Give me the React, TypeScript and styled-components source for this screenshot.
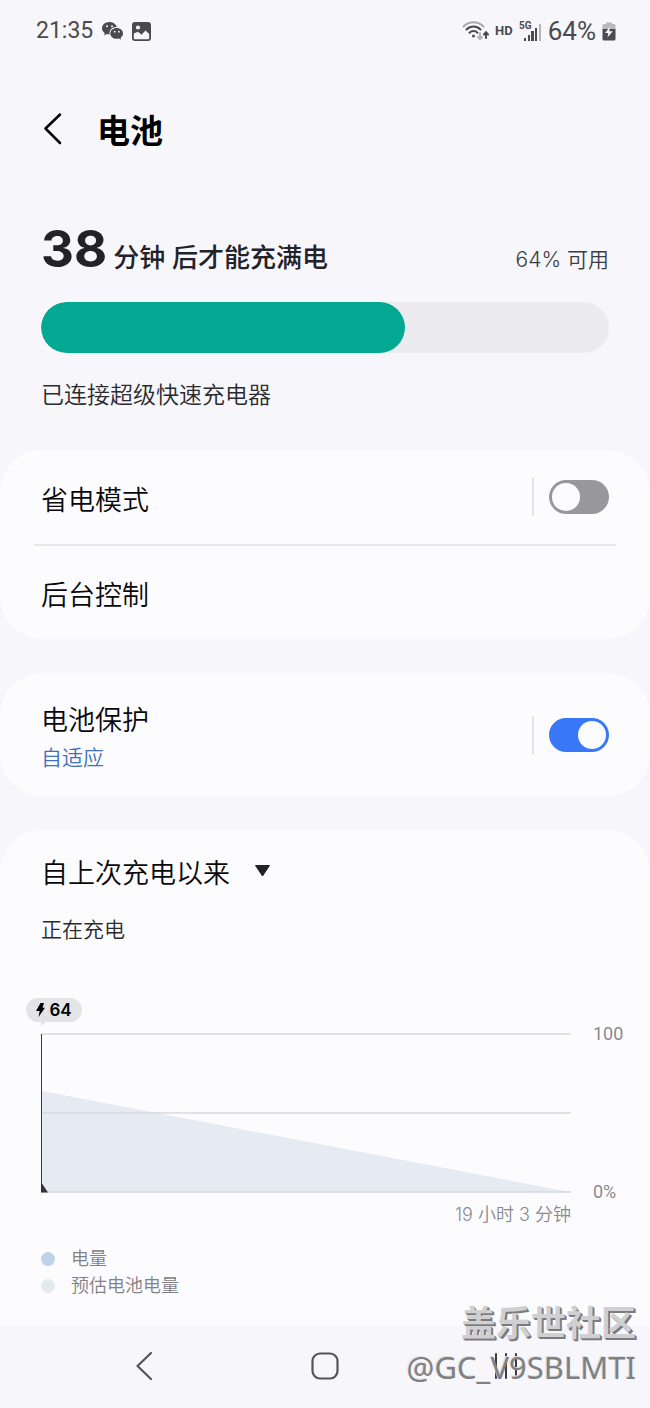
import React, { useState } from "react";
import styled, { createGlobalStyle } from "styled-components";

const GlobalStyle = createGlobalStyle`
  *, *::before, *::after { box-sizing: border-box; }
  body {
    margin: 0;
    background: #f6f6fb;
    color: #08080a;
    font-family: Inter, "Noto Sans CJK SC", sans-serif;
    font-weight: 350;
  }
  h1, h2, p, ul { margin: 0; padding: 0; font-weight: inherit; }
  button { border: 0; padding: 0; background: none; color: inherit; cursor: pointer; }
`;

const Screen = styled.div`
  display: flex;
  flex-direction: column;
  min-height: 100vh;
`;

const StatusBar = styled.header`
  display: flex;
  align-items: center;
  justify-content: space-between;
  height: 60px;
  padding: 2px 34px 0 36px;
  color: #4b4b4e;
`;

const StatusGroup = styled.div<{ $gap: number }>`
  display: flex;
  align-items: center;
  gap: ${(p) => p.$gap}px;
`;

const StatusText = styled.span<{ $size: number }>`
  font: 400 ${(p) => p.$size}px/30px Roboto, sans-serif;
`;

const HdText = styled.span`
  font: 700 13px/20px Roboto, sans-serif;
`;

const AppBar = styled.div`
  display: flex;
  align-items: center;
  gap: 33px;
  height: 138px;
  padding: 0 42px;
`;

const IconButton = styled.button`
  display: flex;
  align-items: center;
  justify-content: center;
`;

const Title = styled.h1`
  padding-top: 4px;
  font-size: 33px;
  line-height: 48px;
  font-weight: 600;
  color: #000;
`;

const Summary = styled.section`
  padding: 19px 41px 40px;
`;

const Headline = styled.div`
  display: flex;
  align-items: baseline;
  justify-content: space-between;
  height: 85px;
  color: #232228;
`;

const Remaining = styled.p`
  display: flex;
  align-items: baseline;
  gap: 6px;
  font-size: 26px;
  line-height: 64px;
  font-weight: 500;
`;

const Minutes = styled.span`
  font-size: 51px;
  font-weight: 700;
`;

const Available = styled.span`
  font-size: 21px;
  color: #3d3d42;
`;

const Meter = styled.div`
  height: 51px;
  border-radius: 26px;
  background: #ececf0;
  overflow: hidden;
`;

const MeterFill = styled.div`
  height: 100%;
  border-radius: 26px;
  background: #03a893;
`;

const Note = styled.p<{ $size: number; $top: number }>`
  margin-top: ${(p) => p.$top}px;
  font-size: ${(p) => p.$size}px;
  line-height: 30px;
  color: #2a2a2f;
`;

const Card = styled.section`
  border-radius: 42px;
  background: #fcfcff;
  margin-bottom: 34px;
`;

const ChartCard = styled(Card)`
  flex: 1;
  margin-bottom: 0;
  padding: 24px 25px 26px 41px;
  border-radius: 42px 42px 0 0;
`;

const Row = styled.div<{ $height: number }>`
  display: flex;
  align-items: center;
  justify-content: space-between;
  min-height: ${(p) => p.$height}px;
  padding: 0 41px;
`;

const RowText = styled.div`
  padding-top: 7px;
`;

const Separator = styled.hr`
  height: 2px;
  margin: 0 34px;
  border: 0;
  background: #e8e8ec;
`;

const RowLabel = styled.label`
  display: block;
  font-size: 27px;
  line-height: 40px;
`;

const RowButton = styled.button`
  font: inherit;
  font-size: 27px;
  line-height: 40px;
`;

const RowHint = styled.p`
  font-size: 21px;
  line-height: 34px;
  color: #3f70bc;
`;

const SwitchBox = styled.div`
  display: flex;
  align-items: center;
  gap: 15px;

  &::before {
    content: "";
    width: 2px;
    height: 38px;
    background: #e3e3e9;
  }
`;

const Switch = styled.input`
  appearance: none;
  display: flex;
  align-items: center;
  width: 60px;
  height: 34px;
  margin: 0;
  padding: 0 3px;
  border-radius: 17px;
  background: #98979c;
  cursor: pointer;

  &::before {
    content: "";
    width: 28px;
    height: 28px;
    border-radius: 50%;
    background: #fcfcff;
  }
  &:checked {
    justify-content: flex-end;
    background: #3877f8;
  }
`;

const Period = styled.div`
  display: flex;
  align-items: center;
  gap: 24px;

  svg { margin-bottom: 6px; }
`;

const PeriodSelect = styled.select`
  appearance: none;
  border: 0;
  margin: 0;
  padding: 0;
  background: none;
  color: inherit;
  font: inherit;
  font-size: 27px;
  line-height: 40px;
  height: 40px;
`;

const Badge = styled.div`
  position: relative;
  display: flex;
  align-items: center;
  justify-content: center;
  gap: 4px;
  width: 56px;
  height: 24px;
  margin: 53px 0 2px -15px;
  border-radius: 12px;
  background: #e4e4e7;
  color: #000;
  font-size: 17px;
  line-height: 24px;
  font-weight: 600;

  &::after {
    content: "";
    position: absolute;
    left: 15px;
    top: 23px;
    border-top: 5px solid #e4e4e7;
    border-right: 6px solid transparent;
  }
`;

const Plot = styled.div`
  display: grid;
  grid-template-columns: 1fr 32px;
  column-gap: 22px;
  color: #8a8a90;
`;

const PlotArea = styled.div`
  padding: 9px 0;

  svg { display: block; width: 100%; height: 160px; }
`;

const Axis = styled.div`
  display: flex;
  flex-direction: column;
  justify-content: space-between;
  font: 400 18px/20px Roboto, sans-serif;
`;

const TimeLabel = styled.span`
  text-align: right;
  font-size: 18px;
  line-height: 26px;
`;

const Legend = styled.ul`
  margin-top: 17px;
  list-style: none;
`;

const LegendItem = styled.li<{ $color: string }>`
  display: flex;
  align-items: center;
  gap: 16px;
  font-size: 18px;
  line-height: 27px;
  color: #808085;

  &::before {
    content: "";
    width: 14px;
    height: 14px;
    border-radius: 50%;
    background: ${(p) => p.$color};
  }
`;

const NavBar = styled.nav`
  position: relative;
  display: grid;
  grid-template-columns: repeat(3, 1fr);
  height: 82px;
  padding: 0 54px 2px;
`;

const Watermark = styled.div`
  position: absolute;
  right: 14px;
  bottom: 19px;
  text-align: right;
  white-space: nowrap;
  pointer-events: none;
  line-height: 44px;
`;

const WatermarkTitle = styled.div`
  font-size: 35px;
  font-weight: 600;
  color: #d0d0d3;
  text-shadow: 1px 1px 0 #7b7b7e, 2px 2px 0 #7b7b7e;
`;

const WatermarkUser = styled.div`
  font-family: "Noto Sans", sans-serif;
  font-size: 31px;
  font-weight: 400;
  color: #808083;
  text-shadow: -1px -1px 0 #dedee2;
`;

const WeChatIcon = () => (
  <svg width="23" height="20" viewBox="0 0 23 20" aria-hidden="true">
    <path d="M8.400 1C4.200 1 1 3.800 1 7.300c0 2 1.100 3.700 2.800 4.900L3.100 14.500l2.700-1.400c.9.300 1.700.4 2.700.4C8 9 11 6 15.800 6.100 15.100 3.200 12 1 8.400 1z" fill="currentColor" />
    <path d="M15.700 7c-3.600 0-6.400 2.400-6.400 5.400s2.800 5.400 6.400 5.400c.8 0 1.500-.1 2.200-.3l2.200 1.300-.6-2c1.500-1 2.500-2.600 2.500-4.400C22 9.400 19.200 7 15.700 7z" fill="currentColor" />
    <g fill="#f6f6fb">
      <circle cx="6" cy="5.300" r="1" /><circle cx="11" cy="5.300" r="1" />
      <circle cx="13.700" cy="10.700" r="0.900" /><circle cx="17.900" cy="10.700" r="0.900" />
    </g>
  </svg>
);

const PictureIcon = () => (
  <svg width="19" height="19" viewBox="0 0 19 19" aria-hidden="true">
    <rect width="19" height="19" rx="3" fill="currentColor" />
    <path d="M1.800 11.500L6 9.800l3.500 3 4-4.300 3.700 3.500V16a1.200 1.200 0 0 1-1.200 1.200H3A1.200 1.200 0 0 1 1.800 16z" fill="#f6f6fb" />
    <circle cx="6" cy="5.500" r="2.100" fill="#f6f6fb" />
  </svg>
);

const WifiIcon = () => (
  <svg width="27" height="22" viewBox="0 0 27 22" fill="none" strokeLinecap="round" aria-hidden="true">
    <path d="M1.500 6.500C7 .8 16 .8 21.500 6.500" stroke="#a9a9ad" strokeWidth="2" />
    <path d="M4.500 9.500c4-4 10-4 14 0M7.500 12.800c2.300-2.300 5.700-2.300 8 0" stroke="currentColor" strokeWidth="2" />
    <circle cx="11.500" cy="16" r="1.500" fill="currentColor" />
    <path d="M18 13v6M16 17l2 2.200 2-2.200" stroke="#b5b5b9" strokeWidth="2" />
    <path d="M24 18v-5.500M22 14.500l2-2.300 2 2.300" stroke="currentColor" strokeWidth="2" />
  </svg>
);

const SignalIcon = () => (
  <svg width="23" height="22" viewBox="0 0 23 22" aria-hidden="true">
    <text x="0" y="9" fontFamily="Roboto, sans-serif" fontWeight="700" fontSize="10" fill="currentColor">5G</text>
    <g fill="currentColor">
      <rect x="5" y="18" width="2" height="3" /><rect x="9" y="15" width="2" height="6" />
      <rect x="12" y="11" width="3" height="10" /><rect x="16" y="8" width="2" height="13" />
    </g>
    <rect x="20" y="4" width="2" height="17" fill="#b5b5b9" />
  </svg>
);

const BatteryIcon = () => (
  <svg width="14" height="20" viewBox="0 0 14 20" aria-hidden="true">
    <path d="M4 1.500h6V3h2a1.500 1.500 0 0 1 1.500 1.500V9H.5V4.500A1.500 1.500 0 0 1 2 3h2z" fill="#b9b9bd" />
    <path d="M.5 8h13v10a1.500 1.500 0 0 1-1.500 1.500H2A1.500 1.500 0 0 1 .5 18z" fill="currentColor" />
    <path d="M8 5.500L3 12h3.300L5.500 16.500l5.300-6.300H7.300z" fill="#f6f6fb" />
  </svg>
);

const Chart = () => (
  <svg viewBox="0 0 530 160" preserveAspectRatio="none" role="img" aria-label="电量">
    <path d="M1 58L529 159H1z" fill="#e5eaf3" />
    <path d="M0 1h530M0 80h530M0 159h530" stroke="#dadae0" strokeOpacity="0.800" strokeWidth="2" />
    <path d="M0.500 1v158" stroke="#3c3c40" strokeWidth="1" />
    <path d="M0 149l7 10.500H0z" fill="#333336" />
  </svg>
);

export default function App() {
  const [saving, setSaving] = useState(false);
  const [protect, setProtect] = useState(true);
  const level = 64;

  return (
    <Screen>
      <GlobalStyle />
      <StatusBar>
        <StatusGroup $gap={8}>
          <StatusText $size={23}>21:35</StatusText>
          <WeChatIcon />
          <PictureIcon />
        </StatusGroup>
        <StatusGroup $gap={6}>
          <WifiIcon />
          <HdText>HD</HdText>
          <SignalIcon />
          <StatusText $size={26}>{level}%</StatusText>
          <BatteryIcon />
        </StatusGroup>
      </StatusBar>

      <AppBar>
        <IconButton type="button" aria-label="返回">
          <svg width="22" height="34" viewBox="0 0 22 34" fill="none" stroke="#000" strokeWidth="2.500" strokeLinecap="round" strokeLinejoin="round">
            <path d="M18 2.500L3.500 16.500 18 31" />
          </svg>
        </IconButton>
        <Title>电池</Title>
      </AppBar>

      <Summary>
        <Headline>
          <Remaining>
            <Minutes>38</Minutes>
            <span>分钟 后才能充满电</span>
          </Remaining>
          <Available>{level}% 可用</Available>
        </Headline>
        <Meter role="meter" aria-valuenow={level} aria-valuemin={0} aria-valuemax={100} aria-label="电池">
          <MeterFill style={{ width: `${level}%` }} />
        </Meter>
        <Note $size={23} $top={27}>已连接超级快速充电器</Note>
      </Summary>

      <Card>
        <Row $height={94}>
          <RowText>
            <RowLabel htmlFor="saving">省电模式</RowLabel>
          </RowText>
          <SwitchBox>
            <Switch id="saving" type="checkbox" role="switch" checked={saving} onChange={(e) => setSaving(e.target.checked)} />
          </SwitchBox>
        </Row>
        <Separator />
        <Row $height={93}>
          <RowText>
            <RowButton type="button">后台控制</RowButton>
          </RowText>
        </Row>
      </Card>

      <Card>
        <Row $height={123}>
          <RowText>
            <RowLabel htmlFor="protect">电池保护</RowLabel>
            <RowHint>自适应</RowHint>
          </RowText>
          <SwitchBox>
            <Switch id="protect" type="checkbox" role="switch" checked={protect} onChange={(e) => setProtect(e.target.checked)} />
          </SwitchBox>
        </Row>
      </Card>

      <ChartCard>
        <Period>
          <PeriodSelect aria-label="时间范围">
            <option>自上次充电以来</option>
          </PeriodSelect>
          <svg width="17" height="12" viewBox="0 0 17 12" aria-hidden="true">
            <path d="M1.500 0.500h14L8.500 11z" fill="#222226" stroke="#222226" strokeLinejoin="round" />
          </svg>
        </Period>
        <Note $size={21} $top={21}>正在充电</Note>
        <Badge>
          <svg width="9" height="14" viewBox="0 0 9 14" aria-hidden="true">
            <path d="M4.500 0H8L6.500 4.700H9L2.500 14l1.200-6H0z" fill="#000" />
          </svg>
          {level}
        </Badge>
        <Plot>
          <PlotArea><Chart /></PlotArea>
          <Axis><span>100</span><span>0%</span></Axis>
          <TimeLabel>19 小时 3 分钟</TimeLabel>
        </Plot>
        <Legend>
          <LegendItem $color="#c1d1e7">电量</LegendItem>
          <LegendItem $color="#e1eaee">预估电池电量</LegendItem>
        </Legend>
      </ChartCard>

      <NavBar>
        <IconButton type="button" aria-label="返回">
          <svg width="18" height="30" viewBox="0 0 18 30" fill="none" stroke="#555558" strokeWidth="2.200" strokeLinecap="round" strokeLinejoin="round">
            <path d="M16 2L2.500 15 16 28" />
          </svg>
        </IconButton>
        <IconButton type="button" aria-label="主页">
          <svg width="28" height="28" viewBox="0 0 28 28" fill="none" stroke="#555558" strokeWidth="2.200">
            <rect x="1.500" y="1.500" width="25" height="25" rx="7.500" />
          </svg>
        </IconButton>
        <IconButton type="button" aria-label="最近">
          <svg width="24" height="28" viewBox="0 0 24 28" stroke="#3c3c3f" strokeWidth="2" strokeLinecap="round">
            <path d="M2 2v24M12 2v24M22 2v24" />
          </svg>
        </IconButton>
        <Watermark>
          <WatermarkTitle>盖乐世社区</WatermarkTitle>
          <WatermarkUser>@GC_V9SBLMTI</WatermarkUser>
        </Watermark>
      </NavBar>
    </Screen>
  );
}
